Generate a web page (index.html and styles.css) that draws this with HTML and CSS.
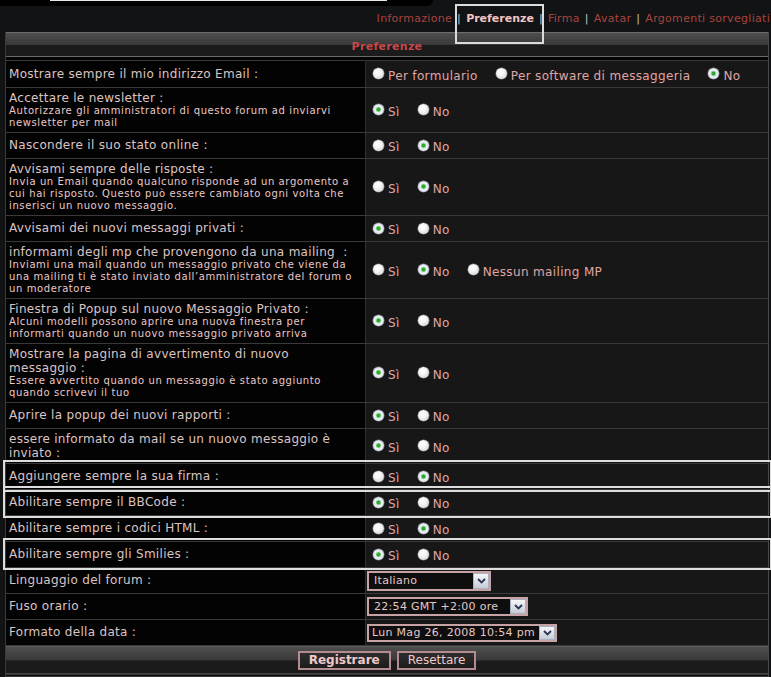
FILE: index.html
```html
<!DOCTYPE html>
<html lang="it">
<head>
<meta charset="utf-8">
<title>Preferenze</title>
<link rel="stylesheet" href="styles.css">
</head>
<body>
<div class="topbar"><div class="topbar-line"></div></div>
<nav class="tabs">
  <a class="tab" href="#">Informazione</a><span class="sep">|</span><a class="tab tab-active" href="#">Preferenze<span class="tab-box"></span></a><span class="sep">|</span><a class="tab" href="#">Firma</a><span class="sep">|</span><a class="tab" href="#">Avatar</a><span class="sep">|</span><a class="tab" href="#">Argomenti sorvegliati</a>
</nav>
<form class="prefs">
<table class="grid">
  <colgroup><col class="col-lbl"><col class="col-val"></colgroup>
  <thead>
    <tr><th colspan="2" class="head">Preferenze</th></tr>
  </thead>
  <tbody>
    <tr class="r1">
      <td class="lbl">Mostrare sempre il mio indirizzo Email :</td>
      <td class="val">
        <label class="opt"><input class="radio" type="radio" name="email">Per formulario</label><label class="opt"><input class="radio" type="radio" name="email">Per software di messaggeria</label><label class="opt"><input class="radio" type="radio" name="email" checked>No</label>
      </td>
    </tr>
    <tr>
      <td class="lbl">Accettare le newsletter :<div class="desc">Autorizzare gli amministratori di questo forum ad inviarvi<br>newsletter per mail</div></td>
      <td class="val"><label class="opt"><input class="radio" type="radio" name="news" checked>Sì</label><label class="opt"><input class="radio" type="radio" name="news">No</label></td>
    </tr>
    <tr>
      <td class="lbl">Nascondere il suo stato online :</td>
      <td class="val"><label class="opt"><input class="radio" type="radio" name="online">Sì</label><label class="opt"><input class="radio" type="radio" name="online" checked>No</label></td>
    </tr>
    <tr>
      <td class="lbl">Avvisami sempre delle risposte :<div class="desc">Invia un Email quando qualcuno risponde ad un argomento a<br>cui hai risposto. Questo può essere cambiato ogni volta che<br>inserisci un nuovo messaggio.</div></td>
      <td class="val"><label class="opt"><input class="radio" type="radio" name="risp">Sì</label><label class="opt"><input class="radio" type="radio" name="risp" checked>No</label></td>
    </tr>
    <tr>
      <td class="lbl">Avvisami dei nuovi messaggi privati :</td>
      <td class="val"><label class="opt"><input class="radio" type="radio" name="mp" checked>Sì</label><label class="opt"><input class="radio" type="radio" name="mp">No</label></td>
    </tr>
    <tr>
      <td class="lbl">informami degli mp che provengono da una mailing &nbsp;:<div class="desc">Inviami una mail quando un messaggio privato che viene da<br>una mailing ti è stato inviato dall’amministratore del forum o<br>un moderatore</div></td>
      <td class="val"><label class="opt"><input class="radio" type="radio" name="mailing">Sì</label><label class="opt"><input class="radio" type="radio" name="mailing" checked>No</label><label class="opt"><input class="radio" type="radio" name="mailing">Nessun mailing MP</label></td>
    </tr>
    <tr>
      <td class="lbl">Finestra di Popup sul nuovo Messaggio Privato :<div class="desc">Alcuni modelli possono aprire una nuova finestra per<br>informarti quando un nuovo messaggio privato arriva</div></td>
      <td class="val"><label class="opt"><input class="radio" type="radio" name="popup" checked>Sì</label><label class="opt"><input class="radio" type="radio" name="popup">No</label></td>
    </tr>
    <tr>
      <td class="lbl">Mostrare la pagina di avvertimento di nuovo<br>messaggio :<div class="desc">Essere avvertito quando un messaggio è stato aggiunto<br>quando scrivevi il tuo</div></td>
      <td class="val"><label class="opt"><input class="radio" type="radio" name="avv" checked>Sì</label><label class="opt"><input class="radio" type="radio" name="avv">No</label></td>
    </tr>
    <tr>
      <td class="lbl">Aprire la popup dei nuovi rapporti :</td>
      <td class="val"><label class="opt"><input class="radio" type="radio" name="rapp" checked>Sì</label><label class="opt"><input class="radio" type="radio" name="rapp">No</label></td>
    </tr>
    <tr>
      <td class="lbl">essere informato da mail se un nuovo messaggio è<br>inviato :</td>
      <td class="val"><label class="opt"><input class="radio" type="radio" name="inv" checked>Sì</label><label class="opt"><input class="radio" type="radio" name="inv">No</label></td>
    </tr>
    <tr class="boxed">
      <td class="lbl">Aggiungere sempre la sua firma :</td>
      <td class="val"><label class="opt"><input class="radio" type="radio" name="firma">Sì</label><label class="opt"><input class="radio" type="radio" name="firma" checked>No</label></td>
    </tr>
    <tr class="boxed">
      <td class="lbl">Abilitare sempre il BBCode :</td>
      <td class="val"><label class="opt"><input class="radio" type="radio" name="bb" checked>Sì</label><label class="opt"><input class="radio" type="radio" name="bb">No</label></td>
    </tr>
    <tr>
      <td class="lbl">Abilitare sempre i codici HTML :</td>
      <td class="val"><label class="opt"><input class="radio" type="radio" name="html">Sì</label><label class="opt"><input class="radio" type="radio" name="html" checked>No</label></td>
    </tr>
    <tr class="boxed">
      <td class="lbl">Abilitare sempre gli Smilies :</td>
      <td class="val"><label class="opt"><input class="radio" type="radio" name="smil" checked>Sì</label><label class="opt"><input class="radio" type="radio" name="smil">No</label></td>
    </tr>
    <tr>
      <td class="lbl">Linguaggio del forum :</td>
      <td class="val val-sel">
        <span class="select w-lang"><select><option>Italiano</option></select><span class="arrow"><svg width="9" height="6" viewBox="0 0 9 6"><path d="M1 1 L4.5 4.5 L8 1" fill="none" stroke="#2c3552" stroke-width="1.8"/></svg></span></span>
      </td>
    </tr>
    <tr>
      <td class="lbl">Fuso orario :</td>
      <td class="val val-sel">
        <span class="select w-tz"><select><option>22:54 GMT +2:00 ore</option></select><span class="arrow"><svg width="9" height="6" viewBox="0 0 9 6"><path d="M1 1 L4.5 4.5 L8 1" fill="none" stroke="#2c3552" stroke-width="1.8"/></svg></span></span>
      </td>
    </tr>
    <tr>
      <td class="lbl">Formato della data :</td>
      <td class="val val-sel">
        <span class="select w-date"><select><option>Lun Mag 26, 2008 10:54 pm</option></select><span class="arrow"><svg width="9" height="6" viewBox="0 0 9 6"><path d="M1 1 L4.5 4.5 L8 1" fill="none" stroke="#2c3552" stroke-width="1.8"/></svg></span></span>
      </td>
    </tr>
  </tbody>
  <tfoot>
    <tr><td colspan="2" class="foot"><button class="btn btn-primary" type="submit">Registrare</button><button class="btn" type="reset">Resettare</button></td></tr>
  </tfoot>
</table>
</form>
</body>
</html>
```

FILE: styles.css
```css
html, body {
  margin: 0;
  padding: 0;
  background: #121314;
}
body {
  width: 771px;
  height: 677px;
  font-family: "DejaVu Sans", Verdana, sans-serif;
  overflow: hidden;
}

.topbar {
  width: 433px;
  height: 6px;
  background: #000;
  border-bottom-right-radius: 8px;
  display: flex;
  padding-left: 50px;
  box-sizing: border-box;
}
.topbar-line {
  width: 337px;
  height: 1px;
  background: #e8e8e8;
}

.tabs {
  height: 26px;
  box-sizing: border-box;
  padding: 6px 1px 0 0;
  text-align: right;
  font-size: 11px;
  line-height: 14px;
  letter-spacing: 0.3px;
  white-space: nowrap;
}
.tab {
  color: #a8443f;
  text-decoration: none;
}
.tab-active {
  position: relative;
  color: #f2c6c6;
  font-weight: bold;
  letter-spacing: 0;
}
.tab-box {
  position: absolute;
  left: -11px;
  right: -10px;
  top: -8px;
  bottom: -19px;
  border: 2px solid #dcdcdc;
  z-index: 2;
}
.sep {
  color: #c4c4c4;
  margin: 0 5px;
}

.prefs {
  margin: 0 0 0 5px;
}
.grid {
  width: 764px;
  border-collapse: collapse;
  table-layout: fixed;
  border-left: 1px solid #3a3a3a;
  border-right: 1px solid #4a4a4a;
}
.col-lbl { width: 360px; }
.col-val { width: auto; }

.head {
  height: 28px;
  padding: 1px 0 0;
  box-sizing: border-box;
  background: linear-gradient(to bottom,
    #6c6c6c 0, #6c6c6c 1px,
    #4f4f4f 1px, #383838 13px,
    #1b1b1b 13px, #1b1b1b 24px,
    #6a6a6a 24px, #6a6a6a 25px,
    #050505 25px, #050505 28px);
  color: #c8474a;
  font-size: 11px;
  letter-spacing: 0.3px;
  font-weight: bold;
  text-align: center;
}

.grid tbody td {
  border-top: 1px solid #393939;
  border-bottom: 1px solid #393939;
  padding: 3px 4px 3px 3px;
  vertical-align: middle;
}
.lbl {
  background: #030303;
  color: #dcc4c4;
  font-size: 12px;
  line-height: 14px;
  letter-spacing: 0.3px;
  white-space: nowrap;
  border-right: 1px solid #2e2e2e;
}
.desc {
  font-size: 10px;
  line-height: 12px;
  letter-spacing: 0.6px;
  color: #ebc8c8;
}
.val {
  background: #171717;
  height: 19px;
  padding-left: 7px !important;
  white-space: nowrap;
}
.r1 .val { height: 20px; }
.grid tbody td.val-sel {
  padding: 3px 4px 2px 1px !important;
  height: 20px;
}

.boxed {
  outline: 2px solid #dedede;
  outline-offset: 1px;
}

.opt {
  display: inline-flex;
  align-items: center;
  margin-right: 18px;
  font-size: 12px;
  line-height: 14px;
  letter-spacing: 0.35px;
  color: #e0a6a6;
  padding-top: 3px;
}
.radio {
  -webkit-appearance: none;
  appearance: none;
  width: 11px;
  height: 11px;
  margin: 0 4px 4px 0;
  border-radius: 50%;
  background: radial-gradient(circle at 40% 35%, #ffffff 0, #f6f6f6 35%, #dadada 75%, #b8b8b8 100%);
  box-shadow: 0 0 0 0.5px #8a8a8a;
}
.radio:checked {
  background: radial-gradient(circle at 50% 50%, #26a526 0, #2fae2f 1.6px, #a8d8a8 2.4px, #eef3f8 3.2px, #d6dde8 70%, #9aa6b8 100%);
}

.select {
  display: flex;
  align-items: center;
  box-sizing: border-box;
  height: 20px;
  border: 2px solid #c8a3a5;
  background: #0e0e0e;
}
.select select {
  -webkit-appearance: none;
  appearance: none;
  flex: 1;
  min-width: 0;
  height: 100%;
  background: transparent;
  border: 0;
  outline: none;
  padding: 0 0 0 5px;
  color: #e4c8c8;
  font-family: "DejaVu Sans", Verdana, sans-serif;
  font-size: 11px;
  letter-spacing: 0.3px;
}
.select .arrow {
  flex: none;
  width: 16px;
  height: 16px;
  box-sizing: border-box;
  border: 1px solid #a9b0c0;
  background: linear-gradient(#f6f7fa, #c6cbd8);
  display: grid;
  place-items: center;
}
.w-lang { width: 124px; }
.w-tz { width: 161px; height: 19px; }
.w-tz .arrow { height: 15px; }
.w-date { width: 190px; height: 18px; }
.w-date select { padding-left: 3px; }
.w-date .arrow { height: 14px; }

.foot {
  height: 32px;
  padding: 5px 0 0;
  text-align: center;
  background: linear-gradient(to bottom,
    #6a6a6a 0, #6a6a6a 1px,
    #4f4f4f 1px, #383838 15px,
    #1b1b1b 15px, #1b1b1b 28px,
    #6a6a6a 28px, #6a6a6a 29px,
    #0a0a0a 29px, #0a0a0a 32px);
  vertical-align: top;
  box-sizing: border-box;
}
.btn {
  height: 19px;
  padding: 0 9px;
  margin: 0 3px;
  border: 2px solid #b48c8f;
  background: linear-gradient(#2e2e2e, #1c1c1c);
  color: #eec8c8;
  font-family: "DejaVu Sans", Verdana, sans-serif;
  font-size: 12px;
  line-height: 14px;
  vertical-align: top;
}
.btn-primary {
  font-weight: bold;
}
```
